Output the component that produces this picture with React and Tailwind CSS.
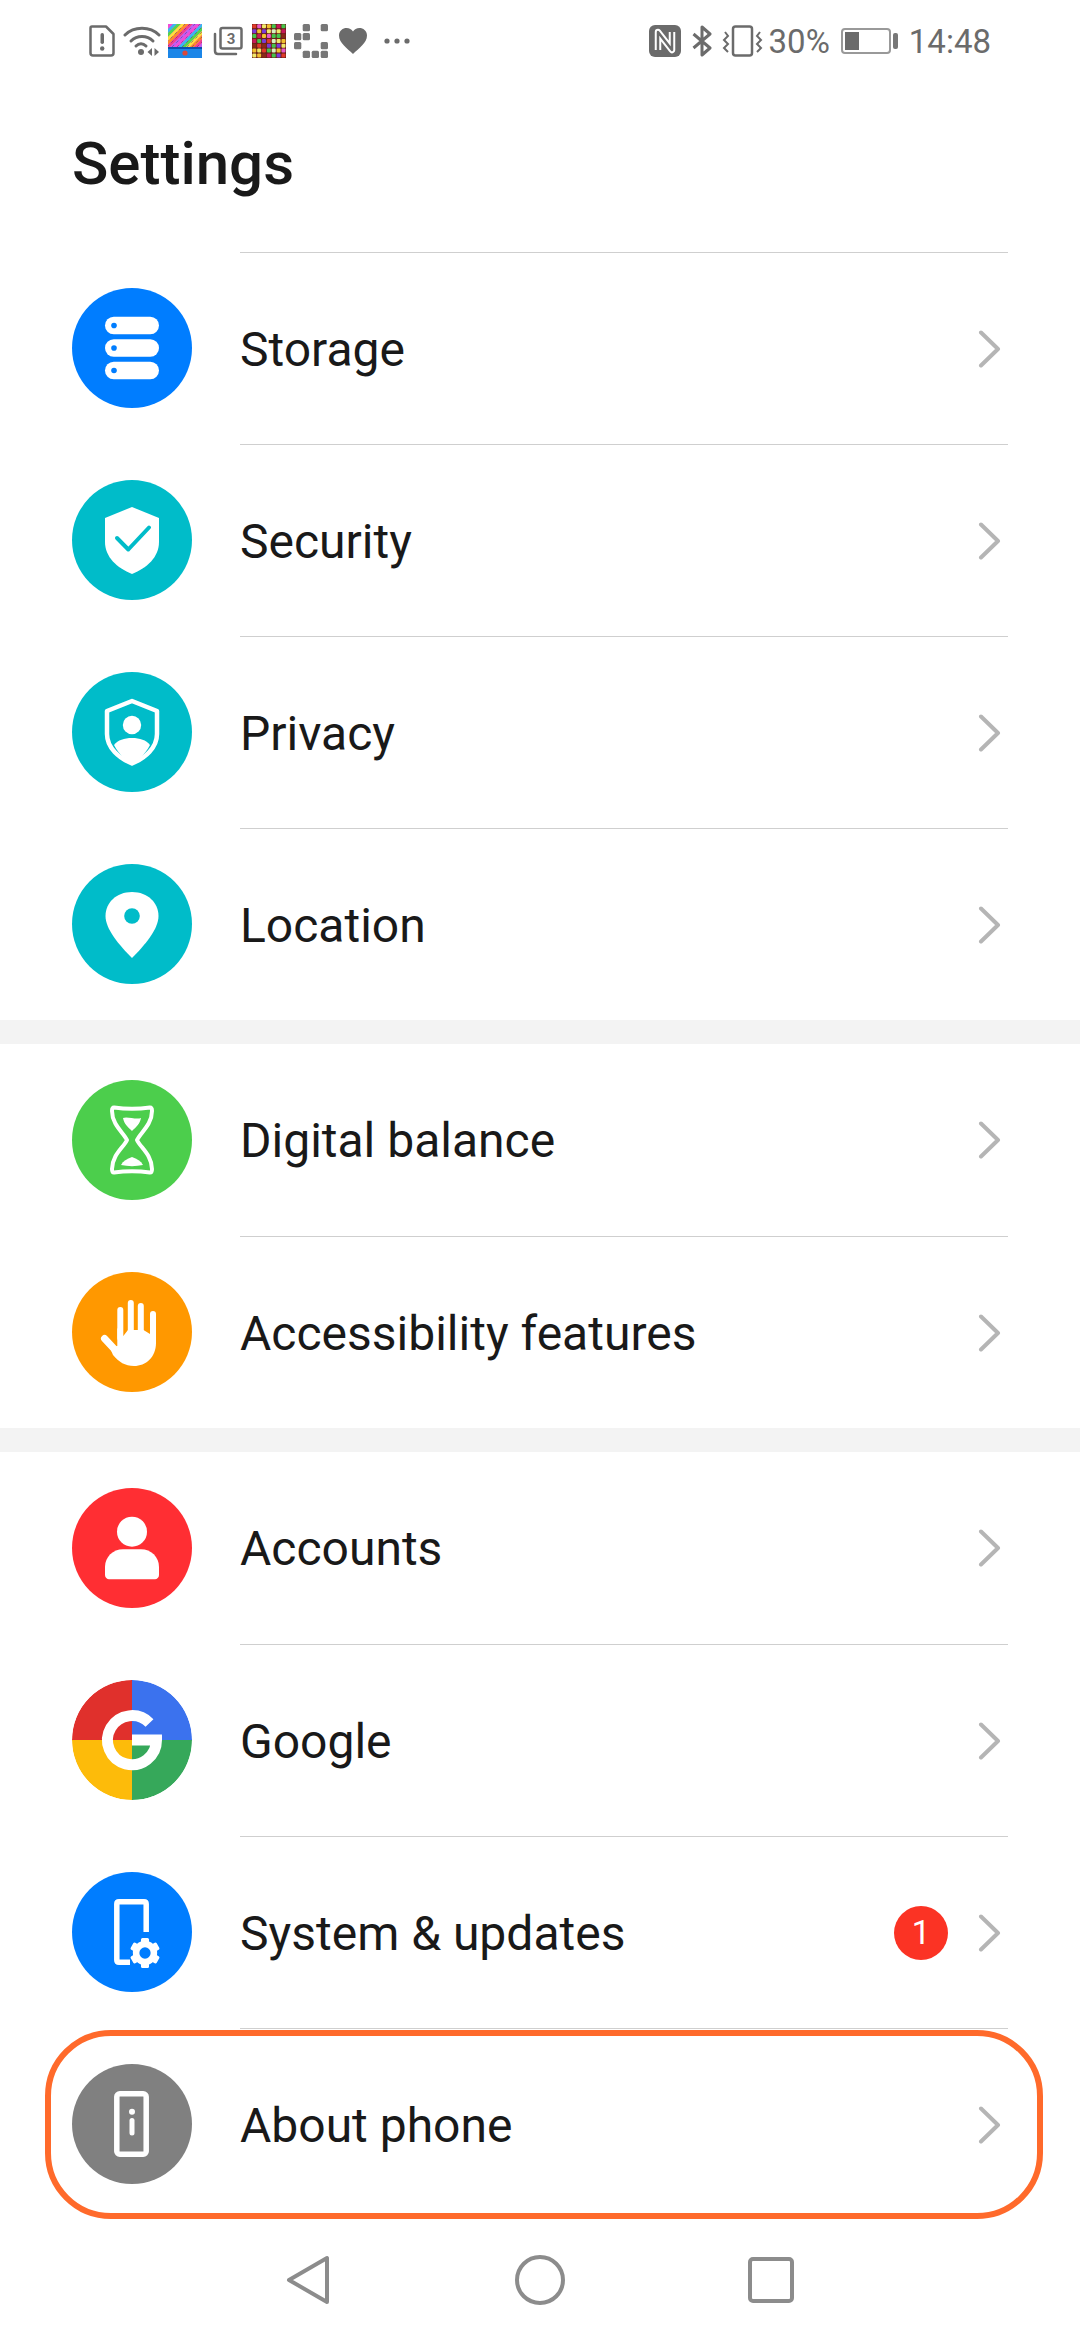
const rows1 = [
  { label: "Storage", color: "bg-[#007dff]", icon: <StorageIcon /> },
  { label: "Security", color: "bg-[#00bcc9]", icon: <SecurityIcon /> },
  { label: "Privacy", color: "bg-[#00bcc9]", icon: <PrivacyIcon /> },
  { label: "Location", color: "bg-[#00bcc9]", icon: <LocationIcon /> },
];
const rows2 = [
  { label: "Digital balance", color: "bg-[#4cce4c]", icon: <HourglassIcon /> },
  { label: "Accessibility features", color: "bg-[#ff9800]", icon: <HandIcon /> },
];
const rows3 = [
  { label: "Accounts", color: "bg-[#ff2e33]", icon: <AccountIcon /> },
  { label: "Google", color: "", icon: <GoogleIcon /> },
  { label: "System & updates", color: "bg-[#007dff]", icon: <SystemIcon />, badge: "1" },
  { label: "About phone", color: "bg-[#808080]", icon: <AboutIcon /> },
];

function IconSvg({ children }) {
  return (
    <svg viewBox="0 0 120 120" className="h-[120px] w-[120px]">
      {children}
    </svg>
  );
}

function StorageIcon() {
  return (
    <IconSvg>
      {[28.7, 51.2, 73.7].map((y) => (
        <g key={y}>
          <rect x="33" y={y} width="54" height="17.5" rx="8.75" fill="#fff" />
          <circle cx="42" cy={y + 8.75} r="2.8" fill="#007dff" />
        </g>
      ))}
    </IconSvg>
  );
}

function SecurityIcon() {
  return (
    <IconSvg>
      <path d="M60 27 L87 38 V62 C87 77 75 88 60 94 C45 88 33 77 33 62 V38 Z" fill="#fff" />
      <path d="M45 58 L56.300 69.500 L77 47.500" fill="none" stroke="#00bcc9" strokeWidth="4" strokeLinecap="round" strokeLinejoin="round" />
    </IconSvg>
  );
}

function PrivacyIcon() {
  return (
    <IconSvg>
      <path d="M60 29 L85 39 V62 C85 76 73 86 60 91.500 C47 86 35 76 35 62 V39 Z" fill="none" stroke="#fff" strokeWidth="4.500" strokeLinejoin="round" />
      <circle cx="60" cy="53" r="9.200" fill="#fff" />
      <path d="M42 73 C46 68 52 66 60 66 C68 66 74 68 78 73 C73 83 66 88 60 91 C54 88 47 83 42 73 Z" fill="#fff" />
    </IconSvg>
  );
}

function LocationIcon() {
  return (
    <IconSvg>
      <path d="M60 28 C44 28 33.500 39 33.500 52 C33.500 65 47 81 60 94 C73 81 86.500 65 86.500 52 C86.500 39 76 28 60 28 Z" fill="#fff" />
      <circle cx="60" cy="52" r="7.800" fill="#00bcc9" />
    </IconSvg>
  );
}

function HourglassIcon() {
  return (
    <IconSvg>
      <path d="M42 27.500 C52 29 68 29 78 27.500 C80 27.500 80 29 80 31 C80 45 68 53 65 60 C68 67 80 75 80 89 C80 91 80 92.500 78 92.500 C68 91 52 91 42 92.500 C40 92.500 40 91 40 89 C40 75 52 67 55 60 C52 53 40 45 40 31 C40 29 40 27.500 42 27.500 Z" fill="none" stroke="#fff" strokeWidth="4" strokeLinejoin="round" />
      <path d="M51 38 C55 36 64 40 69 38 C68 44 64 47 60 51 C56 47 52 44 51 38 Z" fill="#fff" />
      <path d="M49 85 C51 81 55 79 60 77 C65 79 69 81 71 85 C64 86.500 56 86.500 49 85 Z" fill="#fff" />
    </IconSvg>
  );
}

function HandIcon() {
  return (
    <IconSvg>
      <g stroke="#fff" strokeWidth="6" strokeLinecap="round">
        <path d="M48.300 38 V66" />
        <path d="M58.800 31 V60" />
        <path d="M68.800 34 V60" />
        <path d="M81 42 V66" />
        <path d="M32.500 66.500 L46 81" strokeWidth="7" />
      </g>
      <path d="M45.300 56 L51.300 64 L56 58 H61.500 L66 58 H71.500 L78 62 L84 56 V71 C84 85 74 94 62 94 C53 94 47 90 41 83 L38 76 L45.300 74 Z" fill="#fff" />
    </IconSvg>
  );
}

function AccountIcon() {
  return (
    <IconSvg>
      <circle cx="60" cy="43.700" r="15" fill="#fff" />
      <path d="M51 61.300 H69 C79 61.300 87 69 87 79 V87 C87 89.500 85 91.300 83 91.300 H37 C35 91.300 33 89.500 33 87 V79 C33 69 41 61.300 51 61.300 Z" fill="#fff" />
    </IconSvg>
  );
}

function GoogleIcon() {
  return (
    <IconSvg>
      <path d="M60 60 V0 A60 60 0 0 0 0 60 Z" fill="#e0302c" />
      <path d="M60 60 V0 A60 60 0 0 1 120 60 Z" fill="#3b72ee" />
      <path d="M60 60 H0 A60 60 0 0 0 60 120 Z" fill="#fdbb0a" />
      <path d="M60 60 H120 A60 60 0 0 1 60 120 Z" fill="#36a85a" />
      <path d="M77.500 43 A24.500 24.500 0 1 0 84.500 60 H60" fill="none" stroke="#fff" strokeWidth="11" />
    </IconSvg>
  );
}

function SystemIcon() {
  return (
    <IconSvg>
      <path d="M58 90.200 H47 C45.500 90.200 44.800 89.500 44.800 88 V32 C44.800 30.500 45.500 29.800 47 29.800 H72 C73.500 29.800 74.200 30.500 74.200 32 V60" fill="none" stroke="#fff" strokeWidth="5.500" strokeLinejoin="round" />
      <g fill="#fff">
        <circle cx="73" cy="81" r="8.900" fill="none" stroke="#fff" strokeWidth="6.500" />
        {[0, 60, 120, 180, 240, 300].map((a) => (
          <rect key={a} x="69" y="66" width="8" height="6" rx="1.500" transform={`rotate(${a} 73 81)`} />
        ))}
      </g>
    </IconSvg>
  );
}

function AboutIcon() {
  return (
    <IconSvg>
      <rect x="44.800" y="29.800" width="29.400" height="60.400" rx="3" fill="none" stroke="#fff" strokeWidth="5.500" />
      <circle cx="60" cy="47.700" r="3" fill="#fff" />
      <rect x="57.500" y="54" width="5" height="17.500" rx="2.500" fill="#fff" />
    </IconSvg>
  );
}

function Chevron() {
  return (
    <svg viewBox="0 0 24 38" className="h-[38px] w-[24px]" fill="none">
      <path d="M3 2.500 L20 19 L3 35.500" stroke="#b5b5b5" strokeWidth="4" strokeLinecap="round" strokeLinejoin="round" />
    </svg>
  );
}

function Row({ item, first }) {
  return (
    <div className="flex h-[192px] items-center pl-[72px] pr-[72px]">
      <div className={`h-[120px] w-[120px] shrink-0 overflow-hidden rounded-full ${item.color}`}>{item.icon}</div>
      <div className={`ml-[48px] flex h-full flex-1 items-center ${first ? "" : "border-t border-[#cfcfcf]"}`}>
        <span className="flex-1 pt-[2px] text-[48px] leading-none text-[#191919]">{item.label}</span>
        {item.badge && (
          <span className="mr-[30px] flex h-[54px] w-[54px] items-center justify-center rounded-full bg-[#fb3324] text-[33px] leading-none text-white">
            {item.badge}
          </span>
        )}
        <span className="mr-[6px] flex"><Chevron /></span>
      </div>
    </div>
  );
}

function Group({ rows, divideFirst }) {
  return (
    <div>
      {rows.map((r, i) => (
        <Row key={r.label} item={r} first={i === 0 && !divideFirst} />
      ))}
    </div>
  );
}

function Rainbow() {
  const colors = ["#f24bd8", "#38b8f0", "#52d84a", "#ffe03a", "#ff8a2a", "#f04090", "#c060f0"];
  return (
    <svg viewBox="0 0 34 34" className="h-[34px] w-[34px]">
      <rect width="34" height="23" fill="#f24bd8" />
      {Array.from({ length: 14 }).map((_, i) => {
        const x = i * 4 - 22;
        return <path key={i} d={`M${x} 23 L${x + 4} 23 L${x + 27} 0 L${x + 23} 0 Z`} fill={colors[i % 7]} />;
      })}
      {Array.from({ length: 9 }).map((_, i) => (
        <path key={i} d={`M${i * 5 - 6} 23 L${i * 5 + 17} 0`} stroke="#3a2a6a" strokeWidth="0.700" strokeDasharray="3 3" opacity="0.600" />
      ))}
      <rect y="23" width="34" height="11" fill="#1b86e8" />
      <rect y="23" width="34" height="2" fill="#0a4fb0" />
      <circle cx="17" cy="29" r="2.600" fill="#d9483a" />
    </svg>
  );
}

function Candy() {
  const colors = ["#e03a2a", "#f2c12e", "#46c34a", "#e85ac8", "#8a2a1a", "#7a3ad8", "#f0e86a", "#c81a5a"];
  const cells = [];
  for (let y = 0; y < 7; y++) for (let x = 0; x < 7; x++) cells.push([x, y, x === 4 ? (y % 2 ? "#d8f0c0" : "#46c34a") : colors[(x * 3 + y * 5 + (x * y) % 3) % 8]]);
  return (
    <svg viewBox="0 0 34 34" className="h-[34px] w-[34px]">
      <rect width="34" height="34" fill="#6a2018" />
      {cells.map(([x, y, c]) => (
        <rect key={`${x}-${y}`} x={x * 4.860 + 0.300} y={y * 4.860 + 0.300} width="4" height="4" rx="1" fill={c} />
      ))}
    </svg>
  );
}

function Pixels() {
  const draw = [[8.700, 0], [26.700, 0], [0, 9], [8.700, 9], [0, 18], [26.700, 18], [8.700, 26.700], [17.700, 26.700], [26.700, 26.700]];
  return (
    <svg viewBox="0 0 34 34" className="h-[34px] w-[34px]" fill="#777">
      {draw.map(([x, y]) => (
        <rect key={`${x}-${y}`} x={x} y={y} width="7.300" height="7.300" rx="1.500" />
      ))}
    </svg>
  );
}

function StatusBar() {
  const c = "#6b6b6b";
  return (
    <div className="flex h-[82px] items-center justify-between pl-[89px] pr-[89px]">
      <div className="flex items-center">
        <svg viewBox="0 0 26 32" className="h-[32px] w-[26px]" fill="none">
          <path d="M3 1.500 H17 L24.500 9 V28 C24.500 29.500 23.500 30.500 22 30.500 H4 C2.500 30.500 1.500 29.500 1.500 28 V3 C1.500 2 2 1.500 3 1.500 Z" stroke={c} strokeWidth="2.500" strokeLinejoin="round" />
          <rect x="11.500" y="8" width="3.500" height="11" rx="1.700" fill={c} />
          <circle cx="13.200" cy="23.500" r="2.200" fill={c} />
        </svg>
        <svg viewBox="0 0 38 32" className="ml-[8px] h-[32px] w-[38px]" fill="none">
          <path d="M2 10 C11 1 27 1 36 10" stroke={c} strokeWidth="3" strokeLinecap="round" />
          <path d="M8 16 C14 10 24 10 30 16" stroke={c} strokeWidth="3" strokeLinecap="round" />
          <path d="M13 21 C16 18 20 18 23 21" stroke={c} strokeWidth="3" strokeLinecap="round" />
          <circle cx="18" cy="27" r="3" fill={c} />
          <path d="M29 23 L24.500 27 L29 31 Z M31.500 23 L36 27 L31.500 31 Z" fill={c} />
        </svg>
        <span className="ml-[7px] flex"><Rainbow /></span>
        <svg viewBox="0 0 30 30" className="ml-[11px] h-[30px] w-[30px]" fill="none" stroke={c} strokeWidth="2.500">
          <path d="M2 8 V25 C2 27 3 28 5 28 H23" strokeLinecap="round" />
          <rect x="7.500" y="2" width="21" height="20.500" rx="2" />
          <text x="18" y="18" fontSize="15" fontWeight="700" fill={c} stroke="none" textAnchor="middle" fontFamily="Roboto, sans-serif">3</text>
        </svg>
        <span className="ml-[9px] flex"><Candy /></span>
        <span className="ml-[8px] flex"><Pixels /></span>
        <svg viewBox="0 0 30 28" className="ml-[10px] h-[28px] w-[30px]" fill={c}>
          <path d="M15 27 C9 21 1 16 1 8.500 C1 3.500 5 1 8.500 1 C11.500 1 13.500 2.500 15 4.500 C16.500 2.500 18.500 1 21.500 1 C25 1 29 3.500 29 8.500 C29 16 21 21 15 27 Z" />
        </svg>
        <svg viewBox="0 0 26 6" className="ml-[16px] h-[6px] w-[26px]" fill={c}>
          <circle cx="3" cy="3" r="2.600" />
          <circle cx="13" cy="3" r="2.600" />
          <circle cx="23" cy="3" r="2.600" />
        </svg>
      </div>
      <div className="flex items-center">
        <svg viewBox="0 0 32 32" className="h-[32px] w-[32px]">
          <rect width="32" height="32" rx="6" fill={c} />
          <path d="M9 25 V7 L23 25 V7" fill="none" stroke="#fff" strokeWidth="6.500" strokeLinejoin="round" />
          <path d="M9 25 V7 L23 25 V7" fill="none" stroke={c} strokeWidth="2.500" strokeLinejoin="round" />
        </svg>
        <svg viewBox="0 0 20 32" className="ml-[11px] h-[32px] w-[20px]" fill="none" stroke={c} strokeWidth="3" strokeLinejoin="round">
          <path d="M1.500 9 L18 23 L10 30 V2 L18 9 L1.500 23" />
        </svg>
        <svg viewBox="0 0 41 32" className="ml-[10px] h-[32px] w-[41px]" fill="none" stroke={c} strokeWidth="2.500">
          <rect x="11" y="1.500" width="19" height="29" rx="2.500" />
          <path d="M3 7 L6 11 L2 15 L6 19 L2 23 L6 27" strokeWidth="2" />
          <path d="M38 7 L35 11 L39 15 L35 19 L39 23 L35 27" strokeWidth="2" />
        </svg>
        <span className="ml-[6px] text-[33px] leading-none text-[#6b6b6b]">30%</span>
        <div className="ml-[11px] flex items-center">
          <div className="flex h-[26px] w-[50px] items-center rounded-[4px] border-2 border-[#999] py-[2px] pl-[2px]">
            <div className="h-full w-[14px] bg-[#6b6b6b]" />
          </div>
          <div className="ml-[2px] h-[16px] w-[5px] rounded-[2px] bg-[#777]" />
        </div>
        <span className="ml-[11px] text-[33px] leading-none text-[#6b6b6b]">14:48</span>
      </div>
    </div>
  );
}

function NavBar() {
  return (
    <div className="flex h-[120px] items-start justify-center pt-[35px]">
      <svg viewBox="0 0 44 50" className="h-[50px] w-[44px]" fill="none" stroke="#8c8c8c" strokeWidth="4" strokeLinejoin="round">
        <path d="M41 3 V47 L3 25 Z" />
      </svg>
      <svg viewBox="0 0 50 50" className="ml-[185px] h-[50px] w-[50px]" fill="none" stroke="#8c8c8c" strokeWidth="4">
        <circle cx="25" cy="25" r="23" />
      </svg>
      <svg viewBox="0 0 46 46" className="ml-[183px] mt-[2px] h-[46px] w-[46px]" fill="none" stroke="#8c8c8c" strokeWidth="4">
        <rect x="2" y="2" width="42" height="42" rx="3" />
      </svg>
    </div>
  );
}

export default function App() {
  return (
    <div className="relative mx-auto h-[2340px] w-[1080px] overflow-hidden bg-white" style={{ fontFamily: 'Roboto, "Noto Sans", sans-serif' }}>
      <StatusBar />
      <div className="flex h-[170px] items-start pl-[72px] pt-[52px]">
        <h1 className="text-[60px] font-medium leading-[60px] text-[#191919]">Settings</h1>
      </div>
      <div>
        <Group rows={rows1} divideFirst />
        <div className="h-[24px] bg-[#f3f3f3]" />
        <Group rows={rows2} />
        <div className="h-[24px] bg-[#f3f3f3]" />
        <Group rows={rows3} />
      </div>
      <NavBar />
      <div className="absolute left-[45px] top-[2030px] h-[189px] w-[998px] rounded-[66px] border-[6px] border-[#ff6a2b]" />
    </div>
  );
}
